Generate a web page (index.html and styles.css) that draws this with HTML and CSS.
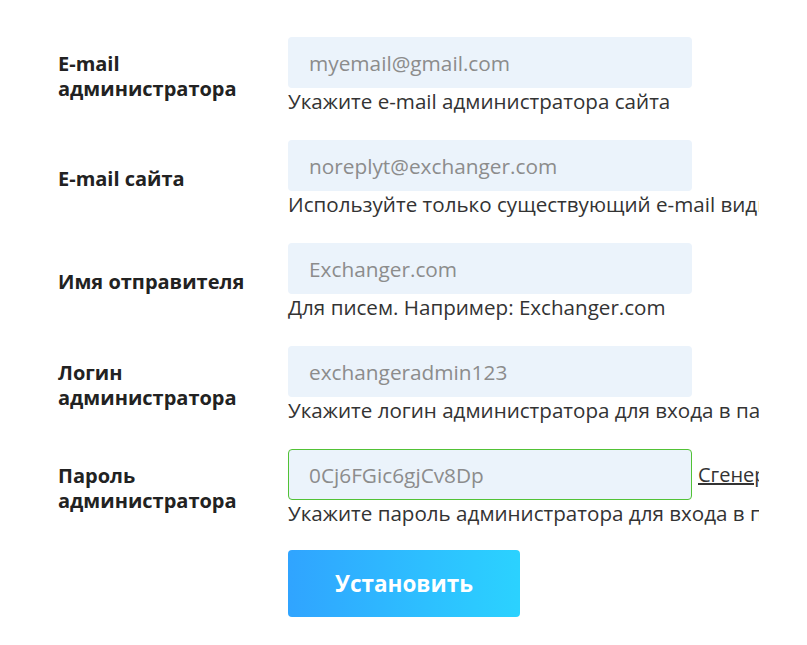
FILE: index.html
```html
<!DOCTYPE html>
<html lang="ru">
<head>
<meta charset="utf-8">
<link rel="stylesheet" href="styles.css">
</head>
<body>
<form class="form">
  <div class="row">
    <label class="label">E-mail<br>администратора</label>
    <div class="field">
      <div class="control"><input class="input" placeholder="myemail@gmail.com"></div>
      <div class="hint">Укажите e-mail администратора сайта</div>
    </div>
  </div>
  <div class="row">
    <label class="label">E-mail сайта</label>
    <div class="field">
      <div class="control"><input class="input" placeholder="noreplyt@exchanger.com"></div>
      <div class="hint">Используйте только существующий e-mail видимый для получателей писем</div>
    </div>
  </div>
  <div class="row">
    <label class="label">Имя отправителя</label>
    <div class="field">
      <div class="control"><input class="input" placeholder="Exchanger.com"></div>
      <div class="hint">Для писем. Например: Exchanger.com</div>
    </div>
  </div>
  <div class="row">
    <label class="label">Логин<br>администратора</label>
    <div class="field">
      <div class="control"><input class="input" placeholder="exchangeradmin123"></div>
      <div class="hint">Укажите логин администратора для входа в панель управления</div>
    </div>
  </div>
  <div class="row">
    <label class="label">Пароль<br>администратора</label>
    <div class="field">
      <div class="control"><input class="input input-ok" placeholder="0Cj6FGic6gjCv8Dp"><a class="gen" href="#">Сгенерировать</a></div>
      <div class="hint">Укажите пароль администратора для входа в панель управления</div>
    </div>
  </div>
  <div class="actions">
    <button class="btn" type="button">Установить</button>
  </div>
</form>
</body>
</html>
```
FILE: styles.css
```css
html, body {
  margin: 0;
  background: #fff;
}
body {
  font-family: "Open Sans", "Noto Sans", sans-serif;
  color: #333;
}
.form {
  width: 701px;
  padding: 37px 0 0 58px;
  overflow: hidden;
  display: flex;
  flex-direction: column;
  gap: 26px;
}
.row {
  display: grid;
  grid-template-columns: 230px 1fr;
  align-items: center;
}
.label {
  font-weight: 700;
  font-size: 20px;
  line-height: 25px;
  color: #222;
}
.field {
  min-width: 0;
}
.control {
  display: flex;
  align-items: center;
  white-space: nowrap;
}
.input {
  flex: none;
  box-sizing: border-box;
  width: 404px;
  height: 51px;
  border: 1px solid transparent;
  border-radius: 4px;
  background: #ebf3fb;
  padding: 0 20px;
  font-family: inherit;
  font-size: 20.8px;
  color: #333;
  outline: none;
}
.input::placeholder {
  color: #8c8c8c;
}
.input-ok {
  border: 1.5px solid #52c236;
}
.gen {
  margin-left: 6px;
  font-size: 20px;
  color: #333;
  text-decoration: underline;
}
.hint {
  font-size: 20.6px;
  line-height: 26px;
  white-space: nowrap;
  color: #333;
}
.actions {
  margin-top: -2px;
  padding-left: 230px;
}
.btn {
  width: 232px;
  height: 67px;
  border: 0;
  border-radius: 4px;
  background: linear-gradient(90deg, #30a4ff, #2bd2ff);
  color: #fff;
  font-family: inherit;
  font-weight: 700;
  font-size: 22.5px;
  cursor: pointer;
}
```
